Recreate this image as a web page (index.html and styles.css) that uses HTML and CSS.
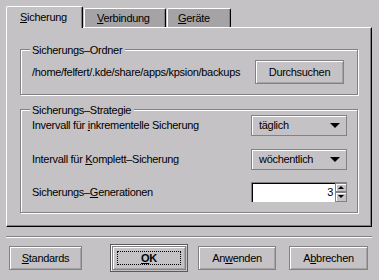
FILE: index.html
```html
<!DOCTYPE html>
<html lang="de">
<head>
  <meta charset="UTF-8" />
  <title>KPsion - Einstellungen</title>
  <link rel="stylesheet" href="styles.css">
</head>
<body>

<div class="dialog">
  <div class="tabbar">
    <div class="tab active"><u>S</u>icherung</div>
    <div class="tab tab-verbindung"><u>V</u>erbindung</div>
    <div class="tab tab-geraete"><u>G</u>eräte</div>
  </div>

  <div class="panel">
    <div class="group group-ordner">
      <span class="group-title">Sicherungs–Ordner</span>
      <div class="row">
        <span>/home/felfert/.kde/share/apps/kpsion/backups</span>
        <button class="btn btn-browse">Durchsuchen</button>
      </div>
    </div>

    <div class="group group-strategie">
      <span class="group-title">Sicherungs–Strategie</span>
      <div class="row row-inc">
        <span>Invervall für <u>i</u>nkrementelle Sicherung</span>
        <div class="combo"><span>täglich</span><span class="arrow"></span></div>
      </div>
      <div class="row row-full">
        <span>Intervall für <u>K</u>omplett–Sicherung</span>
        <div class="combo"><span>wöchentlich</span><span class="arrow"></span></div>
      </div>
      <div class="row row-gen">
        <span>Sicherungs–<u>G</u>enerationen</span>
        <div class="spin">
          <span class="spin-value">3</span>
          <div class="spin-buttons">
            <span class="spin-btn"><span class="up"></span></span>
            <span class="spin-btn"><span class="down"></span></span>
          </div>
        </div>
      </div>
    </div>
  </div>

  <div class="separator"></div>

  <div class="buttons">
    <button class="btn btn-standards"><u>S</u>tandards</button>
    <div class="default-frame">
      <button class="btn btn-ok"><span class="focus"><u>O</u>K</span></button>
    </div>
    <button class="btn btn-apply">An<u>w</u>enden</button>
    <button class="btn btn-cancel">A<u>b</u>brechen</button>
  </div>
</div>

</body>
</html>
```

FILE: styles.css
```css
body {
  margin: 0;
  background: #c5c2c5;
  font-family: "Liberation Sans", Arial, sans-serif;
  font-size: 11px;
  letter-spacing: -0.3px;
  color: #000;
}
.dialog {
  padding: 6px 7px 0 6px;
}
.tabbar {
  display: flex;
  align-items: flex-end;
  height: 21px;
}
.tab {
  position: relative;
  box-sizing: border-box;
  height: 19px;
  padding: 3px 0 0 13px;
  background: #a6a3a6;
  border-top: 1px solid #fff;
  border-left: 1px solid #fff;
  border-right: 1px solid #000;
  border-radius: 2px 2px 0 0;
  box-shadow: inset -1px 0 #838183;
}
.tab.active {
  width: 77px;
  height: 22px;
  margin-bottom: -1px;
  z-index: 1;
  padding-top: 4px;
  background: #c5c2c5;
}
.tab-verbindung {
  width: 82px;
  margin-left: 1px;
  padding-left: 12px;
}
.tab-geraete {
  width: 64px;
  margin-left: 1px;
  padding-left: 10px;
}
.panel {
  box-sizing: border-box;
  height: 200px;
  padding: 21px 13px 0 13px;
  border-top: 1px solid #fff;
  border-left: 1px solid #fff;
  border-right: 1px solid #000;
  border-bottom: 1px solid #000;
  box-shadow: inset -1px -1px #838183;
}
.group {
  position: relative;
  border: 1px solid #838183;
  box-shadow: inset 1px 1px #fff, 1px 1px #fff;
  padding: 0 13px 0 11px;
}
.group-title {
  position: absolute;
  top: -7px;
  left: 9px;
  padding: 0 3px 0 2px;
  background: #c5c2c5;
  line-height: 14px;
}
.group-ordner {
  height: 44px;
}
.group-ordner .row {
  height: 44px;
}
.group-strategie {
  margin-top: 14px;
  height: 102px;
  padding-right: 10px;
}
.row {
  display: flex;
  align-items: center;
  justify-content: space-between;
}
.row-inc {
  margin-top: 1px;
  height: 28px;
}
.row-full {
  height: 40px;
}
.row-gen {
  height: 25px;
}
.btn {
  box-sizing: border-box;
  height: 24px;
  padding: 0;
  font: inherit;
  letter-spacing: inherit;
  color: #000;
  background: #c5c2c5;
  border: 1px solid #838183;
  box-shadow: inset 1px 1px #fff, inset -1px -1px #a6a3a6;
}
.btn-browse {
  width: 89px;
}
.combo {
  box-sizing: border-box;
  display: flex;
  align-items: center;
  justify-content: space-between;
  width: 96px;
  height: 21px;
  padding: 0 6px 0 7px;
  border: 1px solid #838183;
  box-shadow: inset 1px 1px #fff;
}
.arrow {
  width: 0;
  height: 0;
  border-left: 5px solid transparent;
  border-right: 5px solid transparent;
  border-top: 5px solid #000;
}
.spin {
  box-sizing: border-box;
  display: flex;
  width: 96px;
  height: 20px;
  background: #fff;
  border-top: 1px solid #838183;
  border-left: 1px solid #838183;
  box-shadow: inset 1px 1px #000;
}
.spin-value {
  flex: 1;
  text-align: right;
  padding-right: 2px;
  line-height: 19px;
}
.spin-buttons {
  display: flex;
  flex-direction: column;
  width: 12px;
  background: #c5c2c5;
}
.spin-btn {
  box-sizing: border-box;
  display: flex;
  align-items: center;
  justify-content: center;
  height: 9px;
  border: 1px solid #838183;
  box-shadow: inset 1px 1px #fff;
  background: #c5c2c5;
}
.spin-btn + .spin-btn {
  height: 10px;
}
.up, .down {
  width: 0;
  height: 0;
  border-left: 3px solid transparent;
  border-right: 3px solid transparent;
}
.up {
  border-bottom: 3px solid #000;
}
.down {
  border-top: 3px solid #000;
}
.separator {
  margin-top: 9px;
  height: 1px;
  background: #838183;
  border-bottom: 1px solid #fff;
}
.buttons {
  display: flex;
  align-items: center;
  margin-top: 6px;
  padding-left: 3px;
}
.btn-standards {
  width: 73px;
}
.default-frame {
  box-sizing: border-box;
  margin-left: 28px;
  padding: 1px;
  border: 1px solid #5a585a;
  box-shadow: inset 1px 1px #fff;
}
.btn-ok {
  width: 74px;
  font-weight: bold;
}
.focus {
  display: block;
  margin: 4px 4px;
  line-height: 12px;
  border: 1px dotted #000;
}
.btn-apply {
  width: 78px;
  margin-left: 10px;
}
.btn-cancel {
  width: 79px;
  margin-left: 13px;
}
```
